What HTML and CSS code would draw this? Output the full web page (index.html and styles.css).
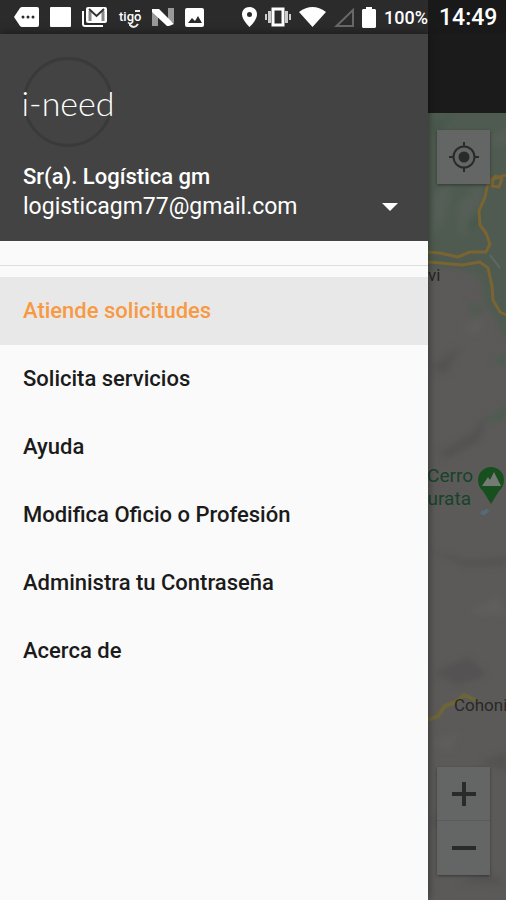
FILE: index.html
```
<!DOCTYPE html>
<html lang="es">
<head>
    <meta charset="UTF-8">
    <meta name="viewport" content="width=device-width, initial-scale=1.0">
    <title>i-need</title>
    <link rel="stylesheet" href="styles.css">
</head>
<body>
    <div class="status-bar">
        <div class="status-main">
            <div class="status-icons">
                <svg width="25" height="20" viewBox="0 0 25 20"><path fill="#fff" d="M8 0h15a2 2 0 0 1 2 2v16a2 2 0 0 1-2 2H8q-1 0-2-1L0 10l6-9q1-1 2-1z"/><g fill="#2b2b2b"><circle cx="9" cy="10" r="1.500"/><circle cx="14" cy="10" r="1.500"/><circle cx="19" cy="10" r="1.500"/></g></svg>
                <svg width="21" height="20" viewBox="0 0 21 20"><rect width="21" height="20" rx="1" fill="#fff"/></svg>
                <svg width="26" height="20" viewBox="0 0 26 20"><path d="M1 4v13q0 2 2 2h18" fill="none" stroke="#fff" stroke-width="2"/><rect x="4" y="0" width="21" height="16" rx="2" fill="#fff"/><path d="M8 14V4M21 14V4" fill="none" stroke="#888" stroke-width="3"/><path d="M7 2l7.500 7L22 2" fill="none" stroke="#333" stroke-width="2"/></svg>
                <span class="carrier">tigo<svg class="carrier-mark" width="12" height="20" viewBox="0 0 12 20"><path d="M6 2h5M0 15q5 6 9 0" fill="none" stroke="#eee" stroke-width="2"/></svg></span>
                <svg width="22" height="18" viewBox="0 0 22 18"><path fill="#999" d="M0 2l6 2v14H0zM16 0h6v15l-6-3z"/><path fill="#fff" d="M0 1h7l15 15-5 2h-2L0 4z"/></svg>
                <svg width="19" height="19" viewBox="0 0 19 19"><rect width="19" height="19" rx="2" fill="#fff"/><path fill="#2b2b2b" d="M3 15l4-5 3 3 3-5 4 7z"/></svg>
            </div>
            <div class="status-icons status-right">
                <svg width="15" height="20" viewBox="0 0 15 20"><path fill="#fff" fill-rule="evenodd" d="M7.500 0C3 0 0 3 0 7.500 0 13 7.500 20 7.500 20S15 13 15 7.500C15 3 12 0 7.500 0zm0 5a2.500 2.500 0 1 1 0 5 2.500 2.500 0 0 1 0-5z"/></svg>
                <svg width="26" height="20" viewBox="0 0 26 20"><rect x="8" y="2" width="10" height="16" fill="none" stroke="#fff" stroke-width="3"/><path d="M4.500 4v12M21.500 4v12" stroke="#ccc" stroke-width="3"/><path d="M1 7v6M25 7v6" stroke="#ccc" stroke-width="2"/></svg>
                <svg width="27" height="20" viewBox="0 0 27 20"><path fill="#fff" d="M0 5Q13.500-5 27 5L13.500 20z"/></svg>
                <svg width="20" height="19" viewBox="0 0 20 19"><path d="M2.500 18L19 2v16z" fill="none" stroke="#686868" stroke-width="2"/></svg>
                <svg width="14" height="21" viewBox="0 0 14 21"><path fill="#fff" d="M4 0h6v2h3l1 1v17l-1 1H1l-1-1V3l1-1h3z"/></svg>
                <span class="battery">100%</span>
            </div>
        </div>
        <time class="clock">14:49</time>
    </div>

    <div class="screen">
        <aside class="drawer">
            <header class="drawer-header">
                <div class="logo"><span>i-need</span></div>
                <div class="user-name">Sr(a). Logística gm</div>
                <div class="account">
                    <span>logisticagm77@gmail.com</span>
                    <button class="account-toggle" aria-label="Cuentas"></button>
                </div>
            </header>
            <nav class="menu">
                <a class="active" href="#">Atiende solicitudes</a>
                <a href="#">Solicita servicios</a>
                <a href="#">Ayuda</a>
                <a href="#">Modifica Oficio o Profesión</a>
                <a href="#">Administra tu Contraseña</a>
                <a href="#">Acerca de</a>
            </nav>
        </aside>

        <main class="content">
            <div class="app-bar"></div>
            <div class="map">
                <svg class="map-canvas" viewBox="0 0 78 787" preserveAspectRatio="xMinYMin slice">
                    <defs>
                        <filter id="soft" x="-20%" y="-20%" width="140%" height="140%" color-interpolation-filters="sRGB"><feGaussianBlur stdDeviation="3"/></filter>
                    </defs>
                    <rect width="78" height="787" fill="#5c5a59"/>
                    <!-- vegetation -->
                    <g filter="url(#soft)">
                        <path fill="#4f5b50" d="M-9-9h96v240q-14-4-20-28-8-32-22-42-20-9-54-5z"/>
                        <path fill="#4f5b50" d="M52 160l24 8v48l-20-26zM40 187l18 8-12 12z"/>
                        <path fill="#565f57" d="M4 84l20-16-8 38-13 18zM30 93l25-26-2 30-20 28zM60 30l20-16v18z"/>
                        <path fill="#48584c" d="M2 10l26-10-20 24zM38 112l18-22-8 28z"/>
                        <path fill="#4b5d50" d="M48 307q12 3 30-16v14q-12 8-30 2zM64 248l14-8v14z"/>
                        <path fill="#545252" d="M2 255l30-22-14 28zM10 340l34-20 14-18-6 26-34 18zM0 436l40 12 38-4v8l-40 2zM6 560l34-16 20 18-30 10zM52 650l26-12v20zM0 710l22-10 12 20zM30 770l30-12 18 14z"/>
                        <path fill="#605d5d" d="M34 215l20-13-4 20zM40 500l30-18 8 20zM0 630l30-10-8 18z"/>
                    </g>
                    <!-- roads -->
                    <g fill="none" stroke="#7a6432" stroke-width="3" stroke-linejoin="round">
                        <path d="M0 139l12 1 18 4 12-5h16l4-8-4-11-6-8-1-14 6-14 3-14 8-7 6 3-3 8-7-1 1-7 13-4"/>
                        <path d="M0 149l12 1 22 2 18-3 8 6 4 18 1 14 7 12 6 3"/>
                    </g>
                    <path d="M62 142l10 13" stroke="#5f6863" stroke-width="2"/>
                    <path d="M0 607l10-4 7-10 11-4 8-7 14 6" fill="none" stroke="#6b6538" stroke-width="4"/>
                    <path d="M60 397l-4 3-3-1" fill="none" stroke="#536c78" stroke-width="4"/>
                    <!-- peak marker -->
                    <path fill="#174f1e" d="M63 391l-8-13q-5-4-5-11a13 13 0 0 1 26 0q0 7-5 11z"/>
                    <path fill="#757a74" d="M54 373l6-9 2 3 4-8 7 14z"/>
                    <g class="map-labels">
                        <text x="0" y="168" fill="#262626">vi</text>
                        <text class="peak-label" x="45" y="369" text-anchor="end">Cerro</text>
                        <text class="peak-label" x="43" y="392" text-anchor="end">urata</text>
                        <text x="26" y="598" fill="#282828">Cohoni</text>
                    </g>
                </svg>
                <button class="map-button" aria-label="Mi ubicación">
                    <svg width="30" height="30" viewBox="0 0 30 30"><circle cx="15" cy="15" r="10.500" fill="none" stroke="#2a2a2a" stroke-width="2"/><circle cx="15" cy="15" r="5.500" fill="#2a2a2a"/><path d="M15 0v5M15 25v5M0 15h5M25 15h5" stroke="#2a2a2a" stroke-width="2"/></svg>
                </button>
                <div class="zoom-controls">
                    <button class="map-button" aria-label="Acercar">
                        <svg width="24" height="24" viewBox="0 0 24 24"><path d="M12 0v24M0 12h24" stroke="#2a2a2a" stroke-width="4"/></svg>
                    </button>
                    <button class="map-button" aria-label="Alejar">
                        <svg width="24" height="24" viewBox="0 0 24 24"><path d="M0 12h24" stroke="#2a2a2a" stroke-width="4"/></svg>
                    </button>
                </div>
            </div>
        </main>
    </div>
</body>
</html>
```
FILE: styles.css
```
* {
    box-sizing: border-box;
}
body {
    margin: 0;
    min-height: 100vh;
    display: flex;
    flex-direction: column;
    font-family: 'Roboto', sans-serif;
    background-color: #fafafa;
}
svg {
    display: block;
}
button {
    padding: 0;
    border: none;
    cursor: pointer;
}

/* status bar */
.status-bar {
    display: flex;
    height: 34px;
    color: #fff;
    font-weight: 500;
    background-color: #191919;
}
.status-main {
    flex: 1;
    display: flex;
    justify-content: space-between;
    align-items: center;
    padding-left: 14px;
    background-color: #2b2b2b;
}
.status-icons {
    display: flex;
    align-items: center;
    gap: 11px;
}
.status-right {
    gap: 8px;
}
.carrier {
    position: relative;
    width: 22px;
    font-size: 13px;
    line-height: 16px;
}
.carrier-mark {
    position: absolute;
    top: 0;
    right: 0;
}
.battery {
    font-size: 18px;
}
.clock {
    width: 78px;
    padding-left: 11px;
    font-size: 23px;
    line-height: 36px;
}

/* drawer */
.screen {
    flex: 1;
    display: flex;
}
.drawer {
    flex: 1;
    z-index: 1;
    background-color: #fafafa;
    box-shadow: 0 0 8px rgba(0, 0, 0, 0.5);
}
.drawer-header {
    height: 207px;
    padding: 23px 23px 0;
    color: #fff;
    background-color: #434343;
}
.logo {
    display: flex;
    justify-content: center;
    align-items: center;
    width: 90px;
    height: 90px;
    margin-bottom: 15px;
    border: 3px solid #3a3a3a;
    border-radius: 50%;
    font-family: 'Lato', sans-serif;
    font-size: 34px;
    font-weight: 300;
    white-space: nowrap;
}
.user-name {
    font-size: 22px;
    font-weight: 500;
    line-height: 30px;
}
.account {
    display: flex;
    justify-content: space-between;
    align-items: center;
    font-size: 23px;
    line-height: 30px;
}
.account-toggle {
    width: 16px;
    height: 8px;
    margin-right: 7px;
    background-color: #fff;
    clip-path: polygon(0 0, 100% 0, 50% 100%);
}
.menu {
    margin-top: 24px;
    padding-top: 11px;
    border-top: 1px solid #dedede;
}
.menu a {
    display: block;
    padding: 0 23px;
    font-size: 22px;
    font-weight: 500;
    line-height: 68px;
    color: #1b1b1b;
    text-decoration: none;
}
.menu .active {
    color: #f79a43;
    background-color: #e8e8e8;
}

/* map behind the drawer */
.content {
    width: 78px;
    display: flex;
    flex-direction: column;
}
.app-bar {
    height: 79px;
    background-color: #1b1b1b;
}
.map {
    position: relative;
    flex: 1;
    display: flex;
    flex-direction: column;
    justify-content: space-between;
    padding: 17px 16px 25px 9px;
    overflow: hidden;
    background-color: #5c5a59;
}
.map-canvas {
    position: absolute;
    top: 0;
    left: 0;
    width: 100%;
    height: 100%;
}
.map-labels {
    font-size: 17px;
}
.peak-label {
    font-size: 19px;
    fill: #17432b;
}
.map-button {
    position: relative;
    display: flex;
    justify-content: center;
    align-items: center;
    width: 100%;
    height: 54px;
    background-color: #646665;
    box-shadow: 0 1px 3px rgba(0, 0, 0, 0.4);
}
.zoom-controls {
    position: relative;
    border-radius: 2px;
    box-shadow: 0 1px 3px rgba(0, 0, 0, 0.4);
}
.zoom-controls .map-button {
    box-shadow: none;
}
.zoom-controls .map-button:first-child {
    border-bottom: 1px solid #5a5b5a;
}
```
